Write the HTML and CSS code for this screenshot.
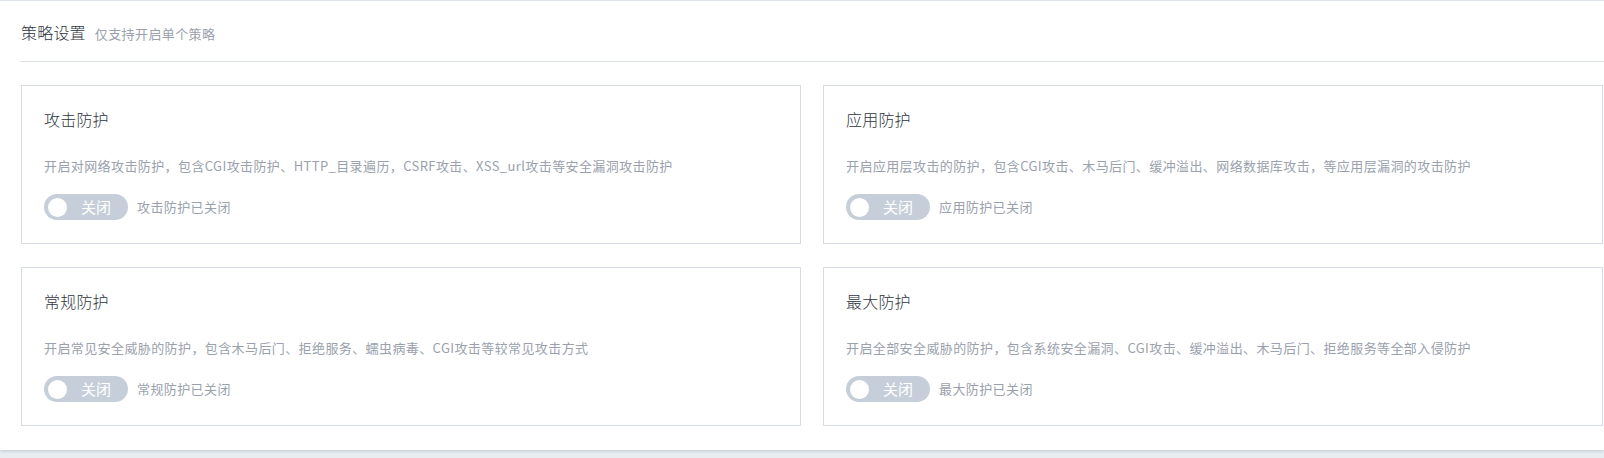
FILE: index.html
```html
<!DOCTYPE html>
<html lang="zh-CN">
<head>
<meta charset="utf-8">
<title>策略设置</title>
<link rel="stylesheet" href="styles.css">
</head>
<body>
<div class="panel">
  <div class="header">
    <span class="title">策略设置</span>
    <span class="subtitle">仅支持开启单个策略</span>
  </div>
  <div class="grid">
    <div class="card">
      <div class="card-title">攻击防护</div>
      <div class="card-desc">开启对网络攻击防护，包含CGI攻击防护、HTTP_目录遍历，CSRF攻击、XSS_url攻击等安全漏洞攻击防护</div>
      <div class="card-row">
        <span class="switch"><span class="knob"></span><span class="switch-text">关闭</span></span>
        <span class="status">攻击防护已关闭</span>
      </div>
    </div>
    <div class="card">
      <div class="card-title">应用防护</div>
      <div class="card-desc">开启应用层攻击的防护，包含CGI攻击、木马后门、缓冲溢出、网络数据库攻击，等应用层漏洞的攻击防护</div>
      <div class="card-row">
        <span class="switch"><span class="knob"></span><span class="switch-text">关闭</span></span>
        <span class="status">应用防护已关闭</span>
      </div>
    </div>
    <div class="card">
      <div class="card-title">常规防护</div>
      <div class="card-desc">开启常见安全威胁的防护，包含木马后门、拒绝服务、蠕虫病毒、CGI攻击等较常见攻击方式</div>
      <div class="card-row">
        <span class="switch"><span class="knob"></span><span class="switch-text">关闭</span></span>
        <span class="status">常规防护已关闭</span>
      </div>
    </div>
    <div class="card">
      <div class="card-title">最大防护</div>
      <div class="card-desc">开启全部安全威胁的防护，包含系统安全漏洞、CGI攻击、缓冲溢出、木马后门、拒绝服务等全部入侵防护</div>
      <div class="card-row">
        <span class="switch"><span class="knob"></span><span class="switch-text">关闭</span></span>
        <span class="status">最大防护已关闭</span>
      </div>
    </div>
  </div>
</div>
</body>
</html>
```

FILE: styles.css
```css
html, body {
  margin: 0;
  padding: 0;
}
body {
  background: #e8edf2;
  font-family: "Noto Sans CJK SC", "Noto Sans", sans-serif;
  height: 458px;
  overflow: hidden;
}
.panel {
  background: #fff;
  border-top: 1px solid #dfe3ea;
  height: 449px;
  box-shadow: 0 1px 3px rgba(160, 172, 190, 0.55);
}
.header {
  margin-left: 21px;
  height: 61px;
  border-bottom: 1px solid #d9dee6;
  display: flex;
  align-items: baseline;
  padding-top: 19px;
  box-sizing: border-box;
}
.title {
  font-size: 16px;
  line-height: 24px;
  color: #2f3542;
  font-weight: 300;
  letter-spacing: 0.2px;
}
.subtitle {
  font-size: 13px;
  line-height: 24px;
  color: #9aa1ad;
  margin-left: 9px;
  letter-spacing: 0.4px;
}
.grid {
  display: grid;
  grid-template-columns: 1fr 1fr;
  gap: 23px 22px;
  padding: 23px 1px 0 21px;
}
.card {
  border: 1px solid #d6dbe4;
  height: 159px;
  box-sizing: border-box;
  padding: 21px 22px 0 22px;
}
.card-title {
  font-size: 16px;
  line-height: 24px;
  color: #2f3542;
  font-weight: 300;
  letter-spacing: 0.2px;
}
.card-desc {
  margin-top: 25px;
  font-size: 13px;
  line-height: 20px;
  color: #9aa1ad;
  white-space: nowrap;
  letter-spacing: 0.4px;
}
.card-row {
  margin-top: 18px;
  display: flex;
  align-items: center;
}
.switch {
  width: 84px;
  height: 26px;
  border-radius: 13px;
  background: #c6cfd9;
  display: flex;
  align-items: center;
  box-sizing: border-box;
  padding-left: 4px;
}
.knob {
  width: 19px;
  height: 19px;
  border-radius: 50%;
  background: #fff;
}
.switch-text {
  color: #fff;
  font-size: 15px;
  line-height: 26px;
  margin-left: 14px;
}
.status {
  margin-left: 9px;
  font-size: 13px;
  color: #9aa1ad;
  line-height: 20px;
  letter-spacing: 0.4px;
}
```
